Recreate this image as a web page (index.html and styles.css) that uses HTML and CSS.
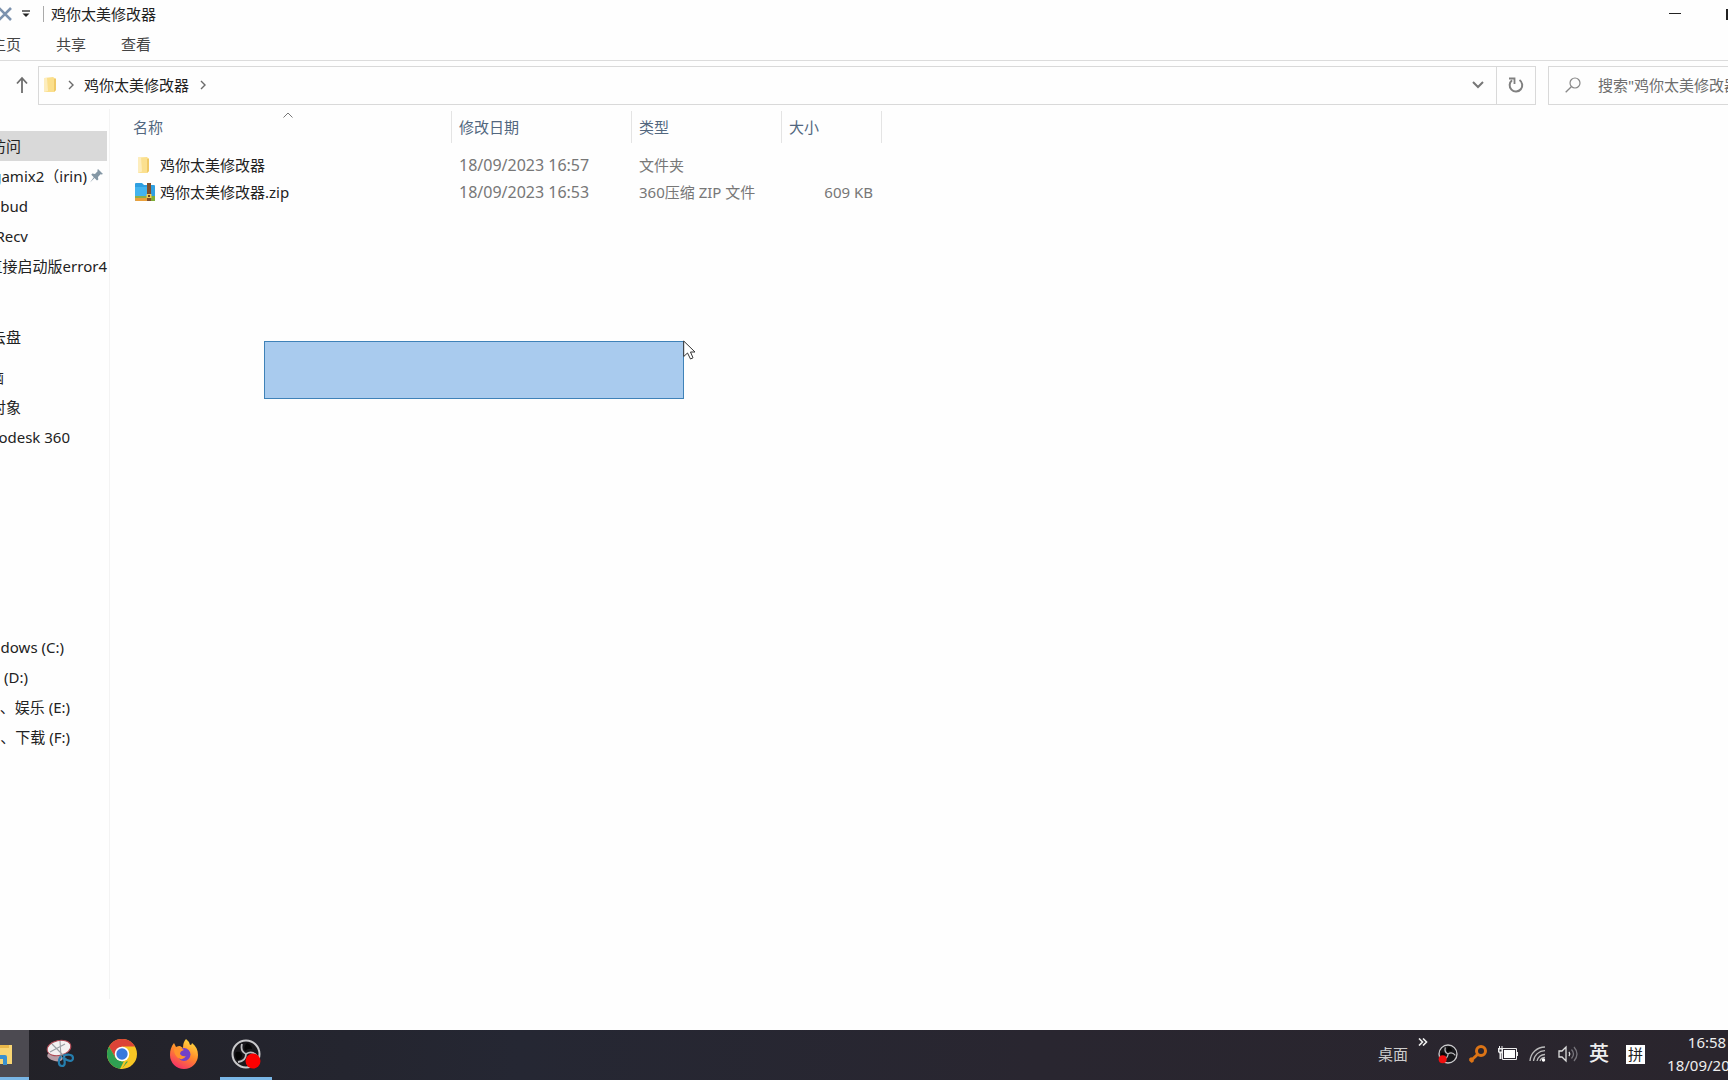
FILE: index.html
```html
<!DOCTYPE html>
<html lang="zh-CN">
<head>
<meta charset="utf-8">
<title>鸡你太美修改器</title>
<link rel="stylesheet" href="styles.css">
</head>
<body>
<header class="titlebar">
  <svg class="close-x" width="13" height="18" viewBox="0 0 13 18"><path d="M-1 3 11 15M11 3-1 15" stroke="#7c92ae" stroke-width="2.6" fill="none"/></svg>
  <svg class="quick-menu" width="8" height="8" viewBox="0 0 8 8"><path d="M0 1h8" stroke="#333" stroke-width="1.4"/><path d="M.5 3.6h7L4 7z" fill="#222"/></svg>
  <span class="title-rule"></span>
  <h1 class="title">鸡你太美修改器</h1>
  <div class="window-buttons">
    <button class="win-btn" aria-label="最小化"><svg width="12" height="12" viewBox="0 0 12 12"><path d="M0 5.5h12" stroke="#222"/></svg></button>
    <button class="win-btn" aria-label="最大化"><svg width="12" height="12" viewBox="0 0 12 12"><path d="M2 2h9v9H2z" fill="none" stroke="#222" stroke-width="2"/></svg></button>
  </div>
</header>
<nav class="tabs">
  <a class="tab tab-home" href="#home">主页</a>
  <a class="tab" href="#share">共享</a>
  <a class="tab" href="#view">查看</a>
</nav>
<div class="navbar">
  <button class="up" aria-label="上移"><svg width="14" height="18" viewBox="0 0 14 18"><path d="M7 17V2M2 7.5 7 2l5 5.5" fill="none" stroke="#6e6e6e" stroke-width="1.8"/></svg></button>
  <div class="address">
    <svg class="crumb-folder" width="14" height="18" viewBox="0 0 14 18"><path d="M1 2 10 1l3 2v11l-2 2H1z" fill="#fbdf8c"/><path d="M1 2h3l1 13-4 1z" fill="#fdedbd"/><path d="m11 3 2-.5V14l-2 2z" fill="#efc968"/></svg>
    <svg class="chev" width="6" height="10" viewBox="0 0 6 10"><path d="m1 1 4 4-4 4" fill="none" stroke="#6b6b6b" stroke-width="1.4"/></svg>
    <a class="crumb" href="#folder">鸡你太美修改器</a>
    <svg class="chev" width="6" height="10" viewBox="0 0 6 10"><path d="m1 1 4 4-4 4" fill="none" stroke="#6b6b6b" stroke-width="1.4"/></svg>
    <button class="history" aria-label="历史记录"><svg width="12" height="8" viewBox="0 0 12 8"><path d="m1 1 5 5 5-5" fill="none" stroke="#777" stroke-width="2"/></svg></button>
    <button class="refresh" aria-label="刷新"><svg width="16" height="16" viewBox="0 0 16 16"><path d="M11.500 3A6.300 6.300 0 1 1 4 3.300" fill="none" stroke="#808080" stroke-width="2"/><path d="M1 1.500h5.500V7" fill="none" stroke="#808080" stroke-width="1.800"/></svg></button>
  </div>
  <div class="search">
    <svg width="16" height="16" viewBox="0 0 16 16"><circle cx="10" cy="6" r="5" fill="none" stroke="#888" stroke-width="1.200"/><path d="M6.300 9.700.7 15.300" stroke="#888" stroke-width="1.300"/></svg>
    <input type="text" aria-label="搜索" placeholder="搜索&quot;鸡你太美修改器&quot;">
  </div>
</div>
<main class="explorer">
  <nav class="sidebar">
    <section class="group">
      <a class="place end-s selected" href="#p1"><span>访问</span></a>
      <a class="place end-l pinned" href="#p2"><span>gamix2（irin)</span><svg width="13" height="14" viewBox="0 0 13 14"><path d="m8 0 5 5-1.500.5-1-.2L8 8l.3 2.500L7 11.500 4.500 9 0 13.500 3.800 8.300 1.300 5.800l1-1.200 2.700.3L7.600 2.300 7.400 1z" fill="#8497a5"/></svg></a>
      <a class="place end-m" href="#p3"><span>bud</span></a>
      <a class="place end-m" href="#p4"><span>Recv</span></a>
      <a class="place end-full" href="#p5"><span>直接启动版error4</span></a>
    </section>
    <section class="group">
      <a class="place end-s" href="#p6"><span>云盘</span></a>
    </section>
    <section class="group">
      <a class="place end-xs" href="#p7"><span>脑</span></a>
      <a class="place end-s" href="#p8"><span>对象</span></a>
      <a class="place end-l" href="#p9"><span>odesk 360</span></a>
    </section>
    <section class="group">
      <a class="place end-d" href="#c"><span>dows (C:)</span></a>
      <a class="place end-m" href="#d"><span>(D:)</span></a>
      <a class="place end-l" href="#e"><span>、娱乐 (E:)</span></a>
      <a class="place end-l" href="#f"><span>、下载 (F:)</span></a>
    </section>
  </nav>
  <section class="files">
    <table class="list">
      <colgroup><col class="c-name"><col class="c-date"><col class="c-type"><col class="c-size"></colgroup>
      <thead>
        <tr>
          <th>名称<svg class="sort" width="10" height="6" viewBox="0 0 10 6"><path d="m.5 5.500 4.500-4.500 4.500 4.500" fill="none" stroke="#777"/></svg></th>
          <th>修改日期</th><th>类型</th><th>大小</th>
        </tr>
      </thead>
      <tbody>
        <tr>
          <td><div class="file"><svg width="22" height="20" viewBox="0 0 22 20"><path d="M4 2.500 13 2l2 2v12l-2 2H4z" fill="#fbe08f"/><path d="M4 2.500h3l1 14-4 1.500z" fill="#fdedbd"/><path d="m13 4 2-.5V16l-2 2z" fill="#f0c966"/></svg>鸡你太美修改器</div></td>
          <td class="date">18/09/2023 16:57</td><td>文件夹</td><td></td>
        </tr>
        <tr>
          <td><div class="file"><svg width="22" height="20" viewBox="0 0 22 20"><path d="M1 2q0-1 1-1h6l2 2h10q1 0 1 1v14q0 1-1 1H2q-1 0-1-1z" fill="#2f9fe0"/><path d="M1 5h12v9H1z" fill="#43b4ef"/><path d="M1 14h20v4q0 1-1 1H2q-1 0-1-1z" fill="#eba13b"/><path d="M1 14h12v2H1z" fill="#8fae4c"/><path d="M17 14h4v5h-4z" fill="#7fae36"/><path d="M13 1h4v18h-4z" fill="#80502c"/><path d="M12.500 12h5v4h-5z" fill="#f2cd57"/><path d="M14 13h2v2h-2z" fill="#6e4420"/></svg>鸡你太美修改器.zip</div></td>
          <td class="date">18/09/2023 16:53</td><td>360压缩 ZIP 文件</td><td class="num">609 KB</td>
        </tr>
      </tbody>
    </table>
    <div class="marquee"></div>
    <svg class="pointer" width="14" height="20" viewBox="0 0 14 20"><path d="M.7 1v15.500L4.500 13l3 6 2.500-1.200L7.500 12H12z" fill="#fff" stroke="#333"/></svg>
  </section>
</main>
<footer class="taskbar">
  <button class="app explorer-app" aria-label="文件资源管理器"><svg width="12" height="26" viewBox="0 0 12 26"><path d="M0 4h12v19H0z" fill="#f8d573"/><path d="M0 4h9v3H0z" fill="#e9b84b"/><path d="M0 14h5q2 0 2 2v8H3v-6H0z" fill="#3a91cf"/></svg></button>
  <button class="app" aria-label="截图工具"><svg width="30" height="30" viewBox="0 0 30 30"><ellipse cx="10" cy="18" rx="8" ry="4" fill="#b69da5" transform="rotate(15 10 18)"/><ellipse cx="14" cy="9" rx="12" ry="7.500" fill="#f3f1f1" stroke="#ad4752" transform="rotate(-12 14 9)"/><path d="m7 5 13 13M15 2l1 16M5 13l15-8" stroke="#9a9ea3" stroke-width="1.100"/><path d="M16 17c-3 4-3 10 1 10s3-6 1-9c5 5 10 5 10 1s-6-4-10-2" fill="none" stroke="#257eae" stroke-width="2.200"/></svg></button>
  <button class="app" aria-label="Chrome"><svg width="30" height="30" viewBox="0 0 30 30"><circle cx="15" cy="15" r="15" fill="#f7c624"/><path d="M2 7.500A15 15 0 0 1 28 7.500H15L8.500 19z" fill="#dc4437"/><path d="M2 7.500 8.500 18.700Q11 22 15 22.500h6L14.500 30A15 15 0 0 1 2 7.500z" fill="#2fa052"/><path d="m21.500 18.500-6.500 11.500-2-.1 4-8z" fill="#f7c624"/><circle cx="15" cy="15" r="7.300" fill="#fff"/><circle cx="15" cy="15" r="5.700" fill="#3778dc"/></svg></button>
  <button class="app" aria-label="Firefox"><svg width="30" height="30" viewBox="0 0 30 30"><defs><linearGradient id="fox" x1=".8" y1="0" x2=".3" y2="1"><stop offset="0" stop-color="#ffe441"/><stop offset=".5" stop-color="#ff8a2b"/><stop offset="1" stop-color="#f62e68"/></linearGradient></defs><path d="M17 0q3 2 4 6 2 0 2-2c4 3 6 7 6 12a14 14 0 0 1-28 0C1 11 2 8 5 4l2 4q2-1 4-1l3 2q0-6 3-9z" fill="url(#fox)"/><circle cx="15" cy="15.500" r="6.500" fill="#7241c9"/><path d="M5 10q6-3 10 1-4 1-4 4 2 3 6 2-3 5-8 2-4-3-4-9z" fill="#ff932c"/></svg></button>
  <button class="app running" aria-label="OBS Studio"><svg width="30" height="30" viewBox="0 0 30 30"><use href="#obs"/><circle cx="22" cy="22" r="7.500" fill="#fb0000"/></svg></button>
  <svg class="defs" width="0" height="0"><defs><g id="obs"><circle cx="15" cy="15" r="13.500" fill="#18171b" stroke="#c9c9cb" stroke-width="2"/><path d="M15 15Q9 12 11 5M15 15q6-4 11 2M15 15q0 7-8 8" fill="none" stroke="#bcbcbf" stroke-width="1.800"/><path d="M14 12q-2-4 2-8 5 2 5 6-4-1-7 2zM11 16q0 5-5 5-3-5-1-8 5-1 6 3z" fill="#050505"/></g></defs></svg>
  <div class="tray">
    <span class="desk">桌面</span>
    <button class="more" aria-label="更多"><svg width="10" height="8" viewBox="0 0 10 8"><path d="m1 .5 3.500 3.500L1 7.500M5 .5 8.500 4 5 7.500" fill="none" stroke="#eee" stroke-width="1.600"/></svg></button>
    <svg class="ico" width="20" height="20" viewBox="0 0 30 30"><use href="#obs"/><circle cx="7" cy="23" r="6" fill="#f01010"/></svg>
    <svg class="ico" width="20" height="20" viewBox="0 0 20 20"><circle cx="13" cy="7" r="4.500" fill="none" stroke="#dc7416" stroke-width="3"/><path d="m9.500 10.500-7.500 7M2 14l3 4" stroke="#dc7416" stroke-width="3"/></svg>
    <svg class="ico" width="20" height="20" viewBox="0 0 20 20"><path d="M4.500 4.500h14v11h-14z" fill="none" stroke="#eee"/><path d="M6 6h11v8H6z" fill="#fff"/><path d="M19 8h1v4h-1z" fill="#eee"/><path d="M0 4h5v4L3.500 9.500V15h-2V9.500L0 8zM1 2h1v3H1zM3.500 2h1v3h-1z" fill="#eee"/><path d="M1.500 5.500h2v2h-2z" fill="#292630"/></svg>
    <svg class="ico" width="20" height="20" viewBox="0 0 20 20"><g fill="none" stroke="#bbb" stroke-width="1.300"><path d="M2 17A15 15 0 0 1 17 3"/><path d="M5.500 17A11.500 11.500 0 0 1 17 6.700"/><path d="M9 17a8 8 0 0 1 8-6.500"/><path d="M12 17q1-3.500 5-3.500"/></g><circle cx="15.500" cy="16" r="1.700" fill="#fff"/></svg>
    <svg class="ico" width="20" height="20" viewBox="0 0 20 20"><path d="M1 7h3l4-4v14l-4-4H1z" fill="none" stroke="#ddd" stroke-width="1.300"/><path d="M11 8q1.500 2 0 4" fill="none" stroke="#ddd" stroke-width="1.300"/><path d="M13.500 5.500q4 4.500 0 9M16 3q6 7 0 14" fill="none" stroke="#77757c" stroke-width="1.300"/></svg>
    <button class="lang">英</button>
    <button class="ime">拼</button>
    <div class="clock"><time>16:58</time><time>18/09/2023</time></div>
  </div>
</footer>
</body>
</html>
```
FILE: styles.css
```css
* { box-sizing: border-box; }
html, body { height: 100%; }
body {
  margin: 0;
  display: flex;
  flex-direction: column;
  overflow: hidden;
  background: #fefefe;
  color: #222;
  font: 15px/20px "Noto Sans", "Noto Sans CJK SC", sans-serif;
}
svg { display: block; flex: none; }
a { color: inherit; text-decoration: none; }
button { border: 0; padding: 0; background: none; color: inherit; font: inherit; display: flex; align-items: center; justify-content: center; flex: none; }

.titlebar { display: flex; align-items: center; height: 28px; }
.quick-menu { margin-left: 9px; }
.title-rule { width: 1px; height: 16px; margin: 0 7px 0 13px; background: #aaa; }
.title { margin: 0; font-size: 15px; font-weight: 400; }
.window-buttons { display: flex; margin-left: auto; margin-right: -31px; }
.win-btn { width: 56px; height: 28px; }

.tabs { display: flex; gap: 35px; height: 33px; padding-top: 6px; border-bottom: 1px solid #dcdcdc; color: #444; }
.tab-home { margin-left: -9px; }

.navbar { display: flex; align-items: center; height: 48px; }
.up { width: 38px; padding-left: 6px; }
.address { display: flex; align-items: center; flex: 1; height: 39px; border: 1px solid #d9d9d9; }
.crumb-folder { margin-left: 4px; }
.chev { margin: 0 10px 0 11px; }
.crumb { white-space: nowrap; }
.history { width: 36px; margin-left: auto; }
.refresh { width: 39px; height: 37px; border-left: 1px solid #d9d9d9; }
.search { display: flex; align-items: center; gap: 17px; width: 194px; height: 39px; margin: 0 -14px 0 12px; padding-left: 16px; border: 1px solid #d9d9d9; flex: none; }
.search input { flex: 1; min-width: 0; border: 0; padding: 0; outline: 0; background: none; font: inherit; }
.search input::placeholder { color: #6d6d6d; opacity: 1; }

.explorer { display: flex; flex: 1; min-height: 0; }
.sidebar { width: 110px; margin-bottom: 31px; padding-top: 22px; border-right: 1px solid #f3f3f3; flex: none; }
.group + .group { margin-top: 10px; }
.group:nth-child(2) { margin-top: 41px; }
.group:nth-child(4) { margin-top: 180px; }
.place { display: flex; align-items: center; width: 107px; height: 30px; white-space: nowrap; }
.place span { display: flex; justify-content: flex-end; }
.selected { background: #d9d9d9; }
.end-xs span { width: 4px; }
.end-s span { width: 21px; }
.end-m span { width: 28px; }
.end-d span { width: 64px; }
.end-l span { width: 70px; }
.end-full span { width: 107px; }
.pinned { gap: 3px; }
.pinned span { width: 87px; }

.files { position: relative; flex: 1; }
.list { width: 772px; margin: 2px 0 0 0; border-collapse: separate; border-spacing: 0; table-layout: fixed; }
.c-name { width: 342px; }
.c-date { width: 180px; }
.c-type { width: 150px; }
.c-size { width: 100px; }
th { position: relative; height: 32px; padding: 0 0 0 7px; border-right: 1px solid #e4e4e4; color: #52677f; font-weight: 400; text-align: left; }
th:first-child { padding-left: 23px; }
.sort { position: absolute; left: 173px; top: 1px; }
td { height: 27px; padding: 0 0 0 7px; color: #777; white-space: nowrap; }
td:first-child { padding-left: 24px; color: #222; }
tbody::before { content: ""; display: block; height: 8px; }
.date { font-size: 16px; }
.num { padding: 0 9px 0 0; text-align: right; }
.file { display: flex; align-items: center; gap: 4px; }
.marquee { position: absolute; left: 154px; top: 232px; width: 420px; height: 58px; background: #a9cbee; border: 1px solid #3f82b8; }
.pointer { position: absolute; left: 573px; top: 231px; }

.taskbar { display: flex; height: 50px; flex: none; background: linear-gradient(90deg, #222127, #252733 30%, #292630 60%, #2a252d); color: #eee; overflow: hidden; }
.app { width: 52px; height: 50px; margin-right: 10px; padding-bottom: 3px; border-bottom: 3px solid transparent; }
.app svg { margin-top: 3px; }
.explorer-app { width: 29px; margin-right: 5px; justify-content: flex-start; background: #4c4a51; border-color: #79b6e6; }
.running { border-color: #79b6e6; }
.tray { display: flex; align-items: center; height: 48px; margin-left: auto; }
.desk { color: #ccc; }
.more { align-self: flex-start; margin: 8px 10px 0 10px; }
.ico { margin-right: 10px; }
.lang { width: 22px; margin-right: 16px; font-size: 20px; font-weight: 500; }
.ime { width: 19px; height: 19px; margin-right: 21px; background: #fff; color: #222; }
.clock { display: flex; flex-direction: column; align-items: center; width: 82px; margin-right: -20px; line-height: 23px; }
```
